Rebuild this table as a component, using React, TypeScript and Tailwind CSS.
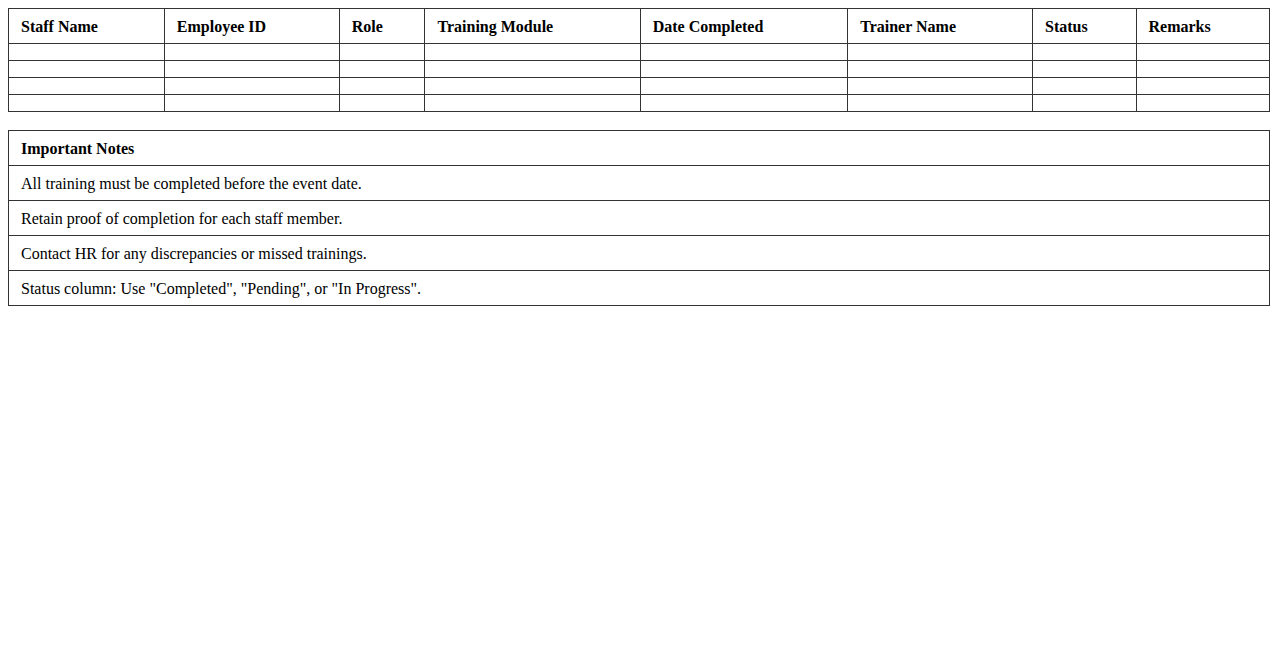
const columns = [
  "Staff Name",
  "Employee ID",
  "Role",
  "Training Module",
  "Date Completed",
  "Trainer Name",
  "Status",
  "Remarks",
];

const notes = [
  "All training must be completed before the event date.",
  "Retain proof of completion for each staff member.",
  "Contact HR for any discrepancies or missed trainings.",
  'Status column: Use "Completed", "Pending", or "In Progress".',
];

export default function App() {
  return (
    <div className="m-2 text-base leading-[18px] text-black font-['Liberation_Serif','Times_New_Roman',serif]">
      <table className="w-full border-collapse">
        <thead>
          <tr>
            {columns.map((col) => (
              <th key={col} className="border border-[#333] px-3 pt-[9px] pb-[7px] text-left font-bold">
                {col}
              </th>
            ))}
          </tr>
        </thead>
        <tbody>
          {[0, 1, 2, 3].map((row) => (
            <tr key={row}>
              {columns.map((col) => (
                <td key={col} className="border border-[#333] px-3 py-2"></td>
              ))}
            </tr>
          ))}
        </tbody>
      </table>

      <table className="mt-[18px] w-full border-collapse">
        <tbody>
          <tr>
            <th className="border border-[#333] px-3 pt-[9px] pb-[7px] text-left font-bold">Important Notes</th>
          </tr>
          {notes.map((note) => (
            <tr key={note}>
              <td className="border border-[#333] px-3 pt-[9px] pb-[7px]">{note}</td>
            </tr>
          ))}
        </tbody>
      </table>
    </div>
  );
}
